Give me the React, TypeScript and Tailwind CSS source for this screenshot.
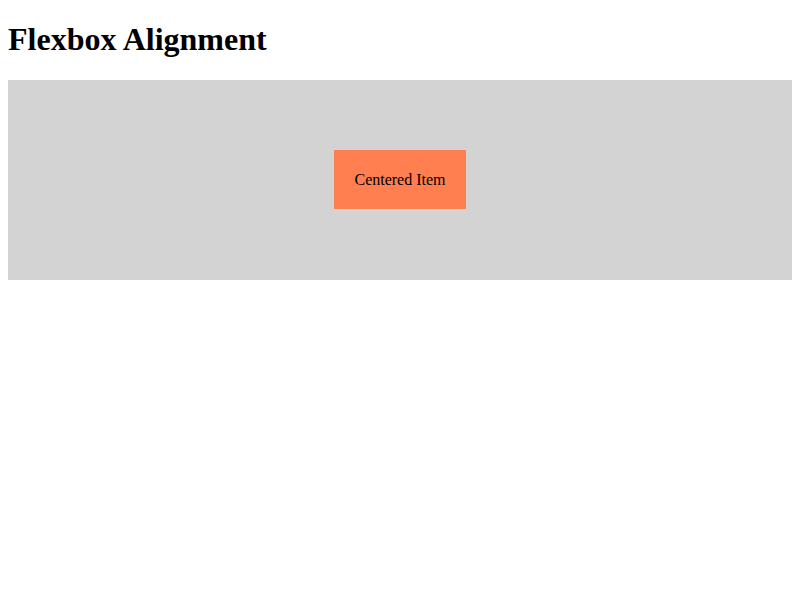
const App = () => {
  return (
    <div className="px-2 pt-[21.44px] font-['Liberation_Serif',serif] text-black">
      <h1 className="mb-[21.44px] text-[32px] font-bold leading-[37px]">
        Flexbox Alignment
      </h1>
      {/* lightgray box, item centred both ways */}
      <div className="flex h-[200px] items-center justify-center bg-[#d3d3d3]">
        <div className="bg-[#ff7f50] p-5 text-base leading-[19px]">
          Centered Item
        </div>
      </div>
    </div>
  );
};

export default App;
